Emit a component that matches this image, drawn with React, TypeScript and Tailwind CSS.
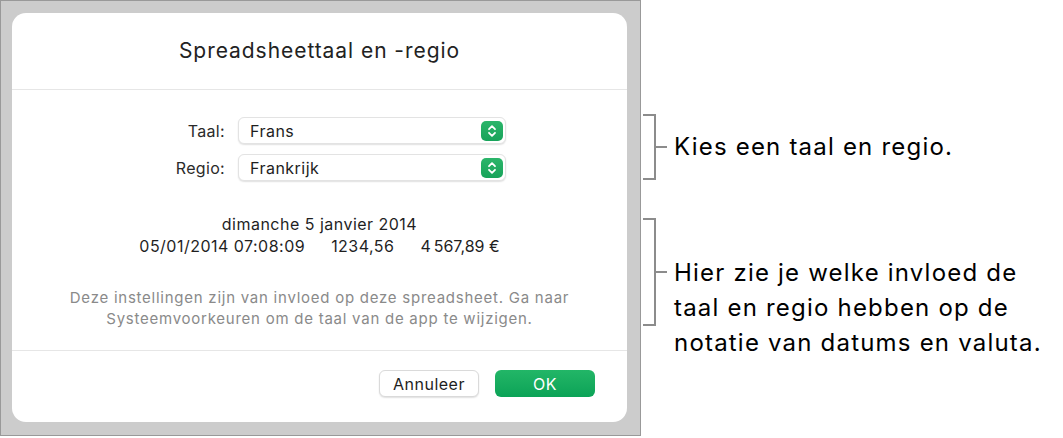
import React from "react";

const FONT = { fontFamily: "Inter, 'Noto Sans', sans-serif" };

function Stepper() {
  return (
    <div className="w-[22px] h-[20px] rounded-[5px] bg-gradient-to-b from-[#2bb56a] to-[#17a35a] flex items-center justify-center">
      <svg width="10" height="14" viewBox="0 0 10 14" fill="none">
        <path d="M2 5.2 L5 2.2 L8 5.2" stroke="white" strokeWidth="1.8" strokeLinecap="round" strokeLinejoin="round" />
        <path d="M2 8.8 L5 11.8 L8 8.8" stroke="white" strokeWidth="1.8" strokeLinecap="round" strokeLinejoin="round" />
      </svg>
    </div>
  );
}

function SelectRow({ label, value }: { label: string; value: string }) {
  return (
    <div className="flex items-center">
      <div className="w-[226px] pr-[13px] text-right text-[16px] tracking-[0.02em] text-[#2a2a2a]">{label}</div>
      <div className="w-[268px] h-[27px] rounded-[6px] bg-white border border-[#e3e3e3] shadow-[0_1px_1.5px_rgba(0,0,0,0.12)] flex items-center justify-between pl-[11px] pr-[2px]">
        <span className="text-[16px] tracking-[0.03em] text-[#1e1e1e]">{value}</span>
        <Stepper />
      </div>
    </div>
  );
}

function Bracket({ height, lines, textTop }: { height: number; lines: string[]; textTop: number }) {
  return (
    <div className="flex items-start">
      <div
        className="w-[13px] border-t-2 border-r-2 border-b-2 border-[#8c8c8c]"
        style={{ height }}
      />
      <div className="w-[11px] h-[2px] bg-[#8c8c8c]" style={{ marginTop: height / 2 - 1 }} />
      <div
        className="pl-[7px] text-[24px] leading-[35px] tracking-[0.05em] text-black whitespace-nowrap"
        style={{ marginTop: textTop }}
      >
        {lines.map((l) => (
          <div key={l}>{l}</div>
        ))}
      </div>
    </div>
  );
}

export default function App() {
  return (
    <div className="w-[1063px] h-[438px] bg-white flex items-start overflow-hidden" style={FONT}>
      <div className="w-[641px] h-[436px] shrink-0 bg-[#cccccc] border border-[#999999] pl-[11px] pt-[12px]">
        <div className="w-[615px] h-[409px] bg-white rounded-[14px] flex flex-col">
          <div className="h-[77px] border-b border-[#e6e6e6] flex items-center justify-center">
            <h1 className="text-[21px] tracking-[0.045em] text-[#222222]">Spreadsheettaal en -regio</h1>
          </div>

          <div className="h-[261px] border-b border-[#e6e6e6] pt-[27px] flex flex-col">
            <div className="flex flex-col gap-[10px]">
              <SelectRow label="Taal:" value="Frans" />
              <SelectRow label="Regio:" value="Frankrijk" />
            </div>

            <div className="mt-[32px] text-center text-[16px] leading-[22px] tracking-[0.03em] text-[#1f1f1f]">
              <div>dimanche 5 janvier 2014</div>
              <div className="flex justify-center gap-[26px]">
                <span>05/01/2014 07:08:09</span>
                <span>1234,56</span>
                <span>4{"\u202F"}567,89 €</span>
              </div>
            </div>

            <div className="mt-[30px] text-center text-[15px] leading-[21px] tracking-[0.05em] text-[#8a8a8a] whitespace-nowrap">
              <div>Deze instellingen zijn van invloed op deze spreadsheet. Ga naar</div>
              <div>Systeemvoorkeuren om de taal van de app te wijzigen.</div>
            </div>
          </div>

          <div className="flex justify-end gap-[16px] pt-[19px] pr-[32px]">
            <button className="w-[100px] h-[27px] rounded-[6px] bg-white border border-[#dadada] shadow-[0_1px_1.5px_rgba(0,0,0,0.12)] text-[16px] tracking-[0.03em] text-[#1e1e1e]">
              Annuleer
            </button>
            <button className="w-[100px] h-[27px] rounded-[6px] bg-gradient-to-b from-[#22b667] to-[#0aa357] text-[16px] tracking-[0.03em] text-white">
              OK
            </button>
          </div>
        </div>
      </div>

      <div className="ml-[2px] pt-[114px] flex flex-col gap-[38px]">
        <Bracket height={66} lines={["Kies een taal en regio."]} textTop={15} />
        <Bracket
          height={108}
          lines={["Hier zie je welke invloed de", "taal en regio hebben op de", "notatie van datums en valuta."]}
          textTop={37}
        />
      </div>
    </div>
  );
}
